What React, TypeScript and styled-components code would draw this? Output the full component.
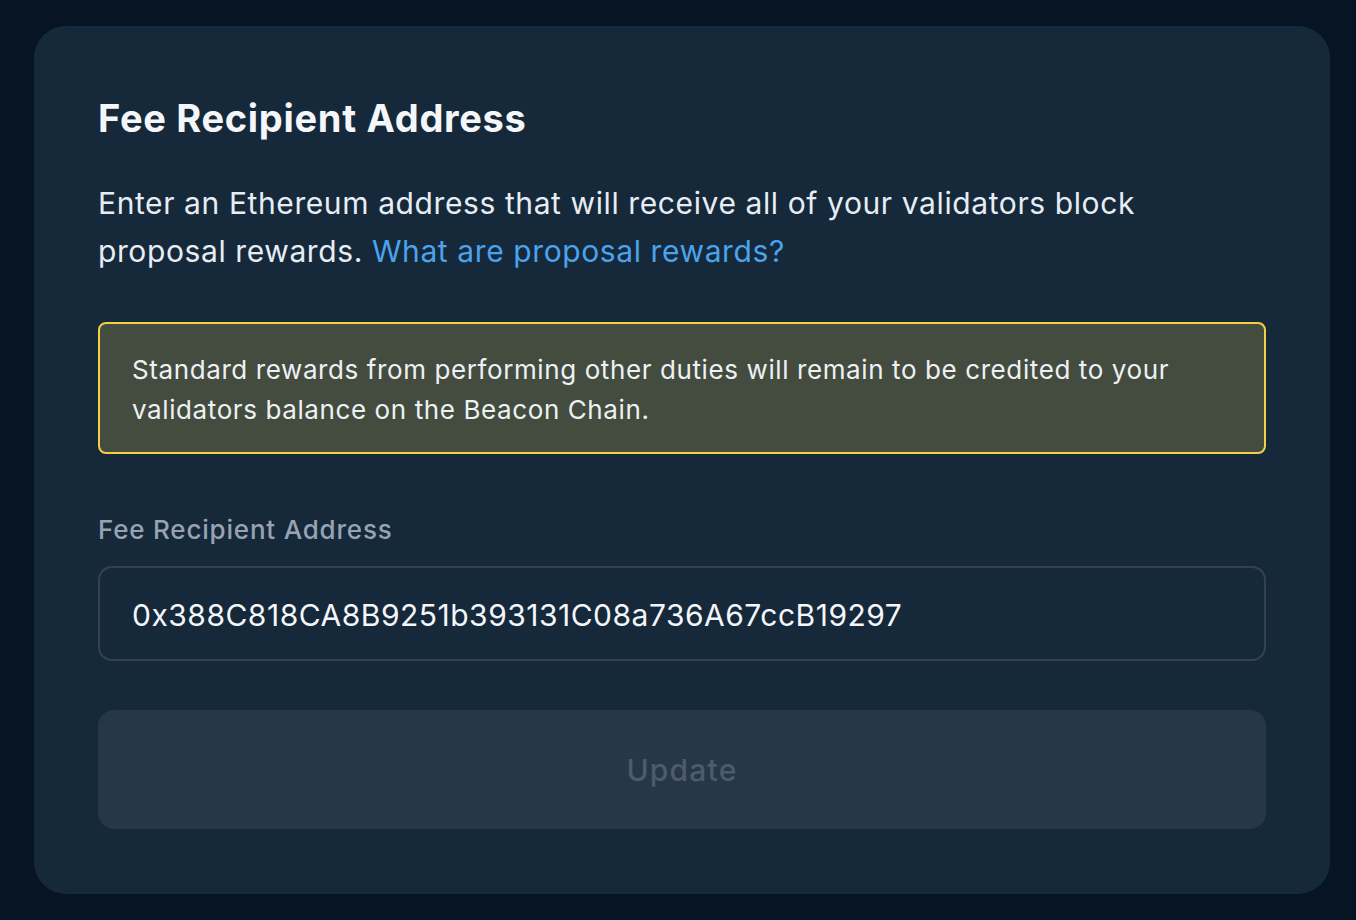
import React from 'react';
import styled, { createGlobalStyle } from 'styled-components';

const GlobalStyle = createGlobalStyle`
  html, body {
    margin: 0;
    padding: 0;
    background: #061424;
  }
  body {
    font-family: Inter, 'Noto Sans', sans-serif;
    -webkit-font-smoothing: antialiased;
  }
`;

const Page = styled.div`
  min-height: 920px;
  box-sizing: border-box;
  padding: 26px 26px 26px 34px;
  background: #061424;
`;

const Card = styled.section`
  width: 1296px;
  box-sizing: border-box;
  padding: 64px 64px 65px;
  background: #15293b;
  border-radius: 32px;
  display: flex;
  flex-direction: column;
`;

const Title = styled.h1`
  margin: 4px 0 0;
  font-size: 38px;
  line-height: 48px;
  font-weight: 700;
  color: #f4f6f9;
  letter-spacing: 0.7px;
`;

const Description = styled.p`
  margin: 37px 0 0;
  font-size: 30px;
  line-height: 48px;
  font-weight: 400;
  color: #e8edf3;
  letter-spacing: 0.6px;
`;

const Link = styled.a`
  color: #4aa3ec;
  text-decoration: none;
  cursor: pointer;
`;

const Notice = styled.div`
  margin-top: 47px;
  padding: 26px 32px 22px;
  border: 2px solid #f2cf45;
  border-radius: 8px;
  background: #444c40;
  font-size: 26px;
  line-height: 40px;
  color: #eef1f3;
  letter-spacing: 0.6px;
`;

const Field = styled.div`
  margin-top: 58px;
  display: flex;
  flex-direction: column;
  gap: 18px;
`;

const Label = styled.label`
  font-size: 26px;
  line-height: 36px;
  font-weight: 500;
  color: #97a2b2;
  letter-spacing: 0.8px;
`;

const Input = styled.input`
  height: 95px;
  box-sizing: border-box;
  padding: 3px 32px 0;
  border: 2px solid #36414f;
  border-radius: 14px;
  background: transparent;
  font-family: inherit;
  font-size: 30px;
  color: #f4f6f9;
  outline: none;
  letter-spacing: 0.5px;
`;

const Button = styled.button`
  margin-top: 49px;
  height: 119px;
  padding-top: 2px;
  border: none;
  border-radius: 16px;
  background: #27374a;
  font-family: inherit;
  font-size: 30px;
  font-weight: 500;
  color: #4e5b6c;
  letter-spacing: 1.2px;
  cursor: not-allowed;
`;

export default function App() {
  return (
    <>
      <GlobalStyle />
      <Page>
        <Card>
          <Title>Fee Recipient Address</Title>
          <Description>
            Enter an Ethereum address that will receive all of your validators block proposal
            rewards. <Link>What are proposal rewards?</Link>
          </Description>
          <Notice>
            Standard rewards from performing other duties will remain to be credited to your
            validators balance on the Beacon Chain.
          </Notice>
          <Field>
            <Label htmlFor="fee-recipient">Fee Recipient Address</Label>
            <Input
              id="fee-recipient"
              defaultValue="0x388C818CA8B9251b393131C08a736A67ccB19297"
              spellCheck={false}
            />
          </Field>
          <Button disabled>Update</Button>
        </Card>
      </Page>
    </>
  );
}
